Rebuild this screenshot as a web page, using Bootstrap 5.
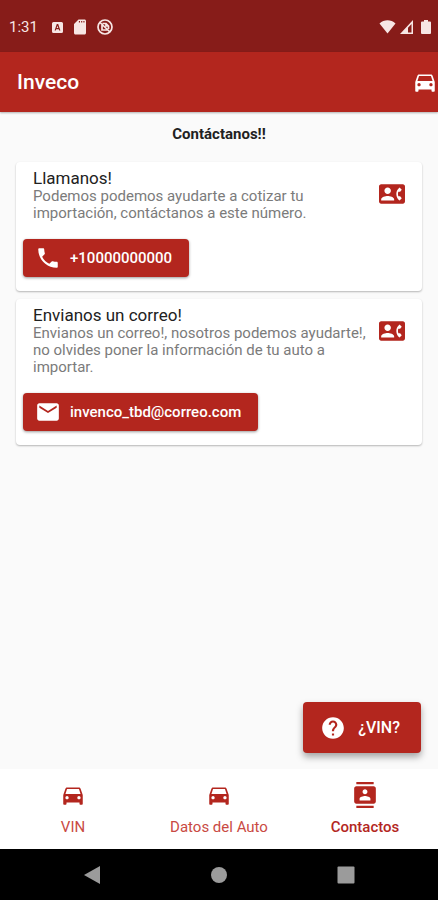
<!DOCTYPE html>
<html lang="es">
<head>
<meta charset="utf-8">
<meta name="viewport" content="width=device-width, initial-scale=1">
<title>Inveco</title>
<link href="https://cdn.jsdelivr.net/npm/bootstrap@5.3.0/dist/css/bootstrap.min.css" rel="stylesheet">
<style>
:root { --brand: #b3261e; --brand-dark: #871c19; }
body { font-family: Roboto, "Liberation Sans", sans-serif; background: #fafafa; color: #212121; font-size: 15px; line-height: 17px; }
svg { display: block; fill: currentColor; flex: none; }
.ic { width: 26px; height: 26px; }
.status-bar { background: var(--brand-dark); height: 52px; padding: 2px 7px 0 9px; font-size: 15px; color: #f7e6e4; }
.clock { margin-right: 14px; }
.app-bar { background: var(--brand); height: 60px; padding: 0 0 0 17px; box-shadow: 0 1px 2px rgba(0,0,0,.3); }
.app-title { font-size: 21px; line-height: 26px; font-weight: 500; }
.page-title { font-size: 15px; line-height: 18px; font-weight: 700; padding: 13px 0 19px; }
.contact-card { border: 0; border-radius: 4px; box-shadow: 0 1px 2px rgba(0,0,0,.28); padding: 6px 7px 14px; }
.contact-head { padding: 0 10px; margin-bottom: 17px; }
.contact-head h2 { font-size: 17px; line-height: 20px; font-weight: 400; margin: 0; }
.contact-head p { color: #7b7b7b; margin: 0; }
.brand-icon { color: var(--brand); margin-top: 13px; }
.btn-brand { --bs-btn-color: #fff; --bs-btn-bg: var(--brand); --bs-btn-border-width: 0; --bs-btn-hover-color: #fff; --bs-btn-hover-bg: #a3211a; --bs-btn-active-color: #fff; --bs-btn-active-bg: #931d17; --bs-btn-font-weight: 500; --bs-btn-font-size: 15px; --bs-btn-border-radius: 4px; box-shadow: 0 1px 3px rgba(0,0,0,.4); height: 38px; padding: 0 17px 0 12px; gap: 9px; }
.btn-fab { --bs-btn-font-size: 16px; height: 51px; padding: 0 21px 0 17px; gap: 12px; box-shadow: 0 4px 7px rgba(0,0,0,.35); margin: 0 17px 16px; }
.tab-bar { background: #fff; height: 80px; }
.tab-bar .nav-link { color: #c94a43; font-size: 15px; line-height: 18px; padding: 13px 0 0; gap: 10px; }
.tab-bar .nav-link svg { color: var(--brand); }
.tab-bar .nav-link.active { color: var(--brand); font-weight: 500; }
.system-bar { background: #000; height: 51px; color: #9b9b9b; padding: 0 83px; }
.system-bar button { color: inherit; }
</style>
<script src="https://cdn.jsdelivr.net/npm/bootstrap@5.3.0/dist/js/bootstrap.bundle.min.js"></script>
</head>
<body>
<svg class="d-none" aria-hidden="true">
  <symbol id="car" viewBox="0 0 24 24"><path d="M18.92 6.01C18.72 5.42 18.16 5 17.5 5h-11c-.66 0-1.21.42-1.42 1.01L3 12v8c0 .55.45 1 1 1h1c.55 0 1-.45 1-1v-1h12v1c0 .55.45 1 1 1h1c.55 0 1-.45 1-1v-8l-2.08-5.99zM6.5 16c-.83 0-1.5-.67-1.5-1.5S5.670 13 6.500 13s1.500.670 1.500 1.500S7.330 16 6.500 16zm11 0c-.83 0-1.500-.67-1.500-1.500s.67-1.500 1.500-1.500 1.500.67 1.500 1.500-.67 1.500-1.500 1.500zM5 11l1.500-4.500h11L19 11H5z"/></symbol>
  <symbol id="contact-phone" viewBox="0 0 24 24"><path d="M22 3H2C.9 3 0 3.900 0 5v14c0 1.100.9 2 2 2h20c1.100 0 1.990-.9 1.990-2L24 5c0-1.100-.9-2-2-2zM8 6c1.660 0 3 1.340 3 3s-1.340 3-3 3-3-1.340-3-3 1.340-3 3-3zm6 12H2v-1c0-2 4-3.100 6-3.100s6 1.100 6 3.100v1zm3.850-4h1.640L21 16l-1.990 1.990c-1.310-.98-2.280-2.380-2.730-3.990-.18-.64-.28-1.310-.28-2s.1-1.360.28-2c.45-1.620 1.420-3.010 2.730-3.990L21 8l-1.510 2h-1.640c-.22.63-.35 1.300-.35 2s.13 1.370.35 2z"/></symbol>
</svg>
<div class="d-flex flex-column min-vh-100">
  <div class="status-bar d-flex align-items-center">
    <span class="clock">1:31</span>
    <svg width="11" height="11" viewBox="0 0 11 11"><path fill-rule="evenodd" d="M1.500 0h8A1.500 1.500 0 0 1 11 1.500v8A1.500 1.500 0 0 1 9.500 11h-8A1.500 1.500 0 0 1 0 9.500v-8A1.500 1.500 0 0 1 1.500 0zM4.800 2 2.600 8.500h1.200l.4-1.300h2.600l.4 1.300h1.200L6.200 2zm.7 1.700.8 2.400H4.700z"/></svg>
    <svg class="ms-2" width="18" height="18" viewBox="0 0 24 24"><path d="M18 2h-8L4.020 8 4 20c0 1.100.9 2 2 2h12c1.100 0 2-.9 2-2V4c0-1.100-.9-2-2-2zm-6 4h-1.500V4H12zm3 0h-1.500V4H15zm3 0h-1.500V4H18z"/></svg>
    <svg class="ms-2" width="16" height="16" viewBox="0 0 16 16"><g fill="none" stroke="currentColor" stroke-width="1.700"><circle cx="8" cy="8" r="7"/><path d="M3 3.500 13 13M5 6v5h5.500M5.500 4.500H9L11.500 7v3M9 4.500V7h2.500"/></g></svg>
    <svg class="ms-auto" width="17" height="14" viewBox="0 0 17 14"><path d="M.5 3.500C5-.8 12-.8 16.500 3.500L8.500 13.500z"/></svg>
    <svg class="ms-1 me-2" width="13" height="14" viewBox="0 0 13 14"><path fill-rule="evenodd" d="M13 0v14H0zM11.500 4 8 7.700v4.800h3.500z"/></svg>
    <svg width="10" height="14" viewBox="0 0 10 14"><path d="M3 0h4v1.500h2a1 1 0 0 1 1 1V13a1 1 0 0 1-1 1H1a1 1 0 0 1-1-1V2.500a1 1 0 0 1 1-1h2z"/></svg>
  </div>
  <header class="app-bar d-flex align-items-center justify-content-between text-white">
    <h1 class="app-title m-0">Inveco</h1>
    <button type="button" class="btn p-0 border-0 text-white" aria-label="Auto"><svg class="ic"><use href="#car"/></svg></button>
  </header>
  <main class="flex-grow-1 d-flex flex-column">
    <div class="page-title text-center">Contáctanos!!</div>
    <div class="d-flex flex-column gap-2 px-3">
      <section class="card contact-card">
        <div class="contact-head d-flex justify-content-between gap-2">
          <div><h2>Llamanos!</h2><p>Podemos podemos ayudarte a cotizar tu importación, contáctanos a este número.</p></div>
          <svg class="ic brand-icon"><use href="#contact-phone"/></svg>
        </div>
        <a href="tel:+10000000000" class="btn btn-brand d-inline-flex align-items-center align-self-start">
          <svg class="ic" viewBox="0 0 24 24"><path d="M6.620 10.790c1.440 2.830 3.760 5.140 6.590 6.590l2.200-2.200c.27-.27.67-.36 1.020-.24 1.120.37 2.330.57 3.570.57.55 0 1 .45 1 1V20c0 .55-.45 1-1 1-9.390 0-17-7.610-17-17 0-.55.45-1 1-1h3.500c.55 0 1 .45 1 1 0 1.250.2 2.450.57 3.570.11.35.03.74-.25 1.020l-2.200 2.200z"/></svg>
          <span>+10000000000</span></a>
      </section>
      <section class="card contact-card">
        <div class="contact-head d-flex justify-content-between gap-2">
          <div><h2>Envianos un correo!</h2><p>Envianos un correo!, nosotros podemos ayudarte!, no olvides poner la información de tu auto a importar.</p></div>
          <svg class="ic brand-icon"><use href="#contact-phone"/></svg>
        </div>
        <a href="mailto:invenco_tbd@correo.com" class="btn btn-brand d-inline-flex align-items-center align-self-start">
          <svg class="ic" viewBox="0 0 24 24"><path d="M20 4H4c-1.100 0-1.990.9-1.990 2L2 18c0 1.100.9 2 2 2h16c1.100 0 2-.9 2-2V6c0-1.100-.9-2-2-2zm0 4-8 5-8-5V6l8 5 8-5v2z"/></svg>
          <span>invenco_tbd@correo.com</span></a>
      </section>
    </div>
    <button type="button" class="btn btn-brand btn-fab d-inline-flex align-items-center align-self-end mt-auto">
      <svg class="ic" viewBox="0 0 24 24"><path d="M12 2C6.480 2 2 6.480 2 12s4.480 10 10 10 10-4.480 10-10S17.520 2 12 2zm1 17h-2v-2h2v2zm2.070-7.750-.9.920C13.450 12.900 13 13.500 13 15h-2v-.5c0-1.100.45-2.100 1.170-2.830l1.240-1.260c.37-.36.59-.86.59-1.410 0-1.100-.9-2-2-2s-2 .9-2 2H8c0-2.210 1.790-4 4-4s4 1.790 4 4c0 .88-.36 1.680-.93 2.250z"/></svg>
      <span>¿VIN?</span></button>
  </main>
  <nav class="tab-bar nav nav-fill row g-0">
    <a href="#vin" class="nav-link col-4 d-flex flex-column align-items-center"><svg class="ic"><use href="#car"/></svg>VIN</a>
    <a href="#datos" class="nav-link col-4 d-flex flex-column align-items-center"><svg class="ic"><use href="#car"/></svg>Datos del Auto</a>
    <a href="#contactos" class="nav-link active col-4 d-flex flex-column align-items-center" aria-current="page"><svg class="ic" viewBox="0 0 24 24"><path d="M20 0H4v2h16V0zM4 24h16v-2H4v2zM20 4H4c-1.100 0-2 .9-2 2v12c0 1.100.9 2 2 2h16c1.100 0 2-.9 2-2V6c0-1.100-.9-2-2-2zm-8 2.750c1.240 0 2.250 1.010 2.250 2.250s-1.010 2.250-2.250 2.250S9.750 10.240 9.750 9 10.760 6.750 12 6.750zM17 17H7v-1.500c0-1.670 3.330-2.500 5-2.500s5 .83 5 2.500V17z"/></svg>Contactos</a>
  </nav>
  <div class="system-bar d-flex align-items-center justify-content-between">
    <button type="button" class="btn p-0 border-0" aria-label="Atrás"><svg width="18" height="18" viewBox="0 0 18 18"><path d="M17 0v18L1 9z"/></svg></button>
    <button type="button" class="btn p-0 border-0" aria-label="Inicio"><svg width="16" height="16" viewBox="0 0 16 16"><circle cx="8" cy="8" r="8"/></svg></button>
    <button type="button" class="btn p-0 border-0" aria-label="Recientes"><svg width="18" height="18" viewBox="0 0 18 18"><rect x=".5" y=".5" width="17" height="17" rx="1"/></svg></button>
  </div>
</div>
</body>
</html>
